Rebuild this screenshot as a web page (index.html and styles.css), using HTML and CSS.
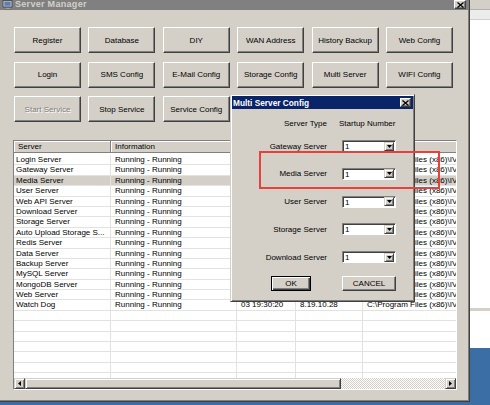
FILE: index.html
```html
<!DOCTYPE html>
<html>
<head>
<meta charset="utf-8">
<title>Server Manager</title>
<link rel="stylesheet" href="styles.css">
</head>
<body>
<div class="desktop">
  <div class="win">
    <div class="titlebar">
      <div class="title-left">
        <svg class="app-icon" width="12" height="10" viewBox="0 0 12 10"><rect x="1" y="0.5" width="9" height="6.5" fill="#c8c8c8" stroke="#404040" stroke-width="0.8"/><rect x="2.4" y="1.6" width="6.2" height="4.2" fill="#5a7fb8"/><rect x="3" y="7.6" width="6" height="2" fill="#a0a0a0" stroke="#505050" stroke-width="0.5"/></svg>
        <span class="title-text">Server Manager</span>
      </div>
      <div class="xbtn main-x"><svg width="7" height="6" viewBox="0 0 7 6"><path d="M0.5 0.5L6.5 5.5M6.5 0.5L0.5 5.5" stroke="#000" stroke-width="1.3"/></svg></div>
    </div>
    <div class="content">
      <div class="btn-grid">
        <button class="btn">Register</button>
        <button class="btn">Database</button>
        <button class="btn">DIY</button>
        <button class="btn">WAN Address</button>
        <button class="btn">History Backup</button>
        <button class="btn">Web Config</button>
        <button class="btn">Login</button>
        <button class="btn">SMS Config</button>
        <button class="btn">E-Mail Config</button>
        <button class="btn">Storage Config</button>
        <button class="btn">Multi Server</button>
        <button class="btn">WIFI Config</button>
        <button class="btn disabled">Start Service</button>
        <button class="btn">Stop Service</button>
        <button class="btn">Service Config</button>
      </div>
      <div class="list">
        <div class="lv-head">
          <div class="hcell">Server</div>
          <div class="hcell">Information</div>
          <div class="hcell"></div>
          <div class="hcell"></div>
          <div class="hcell"></div>
        </div>
        <div class="lv-body">
          <div class="row"><div class="cell">Login Server</div><div class="cell">Running - Running</div><div class="cell"></div><div class="cell"></div><div class="cell">C:\Program Files (x86)\IVMS\</div></div>
          <div class="row"><div class="cell">Gateway Server</div><div class="cell">Running - Running</div><div class="cell"></div><div class="cell"></div><div class="cell">C:\Program Files (x86)\IVMS\</div></div>
          <div class="row sel"><div class="cell">Media Server</div><div class="cell">Running - Running</div><div class="cell"></div><div class="cell"></div><div class="cell">C:\Program Files (x86)\IVMS\</div></div>
          <div class="row"><div class="cell">User Server</div><div class="cell">Running - Running</div><div class="cell"></div><div class="cell"></div><div class="cell">C:\Program Files (x86)\IVMS\</div></div>
          <div class="row"><div class="cell">Web API Server</div><div class="cell">Running - Running</div><div class="cell"></div><div class="cell"></div><div class="cell">C:\Program Files (x86)\IVMS\</div></div>
          <div class="row"><div class="cell">Download Server</div><div class="cell">Running - Running</div><div class="cell"></div><div class="cell"></div><div class="cell">C:\Program Files (x86)\IVMS\</div></div>
          <div class="row"><div class="cell">Storage Server</div><div class="cell">Running - Running</div><div class="cell"></div><div class="cell"></div><div class="cell">C:\Program Files (x86)\IVMS\</div></div>
          <div class="row"><div class="cell">Auto Upload Storage S...</div><div class="cell">Running - Running</div><div class="cell"></div><div class="cell"></div><div class="cell">C:\Program Files (x86)\IVMS\</div></div>
          <div class="row"><div class="cell">Redis Server</div><div class="cell">Running - Running</div><div class="cell"></div><div class="cell"></div><div class="cell">C:\Program Files (x86)\IVMS\</div></div>
          <div class="row"><div class="cell">Data Server</div><div class="cell">Running - Running</div><div class="cell"></div><div class="cell"></div><div class="cell">C:\Program Files (x86)\IVMS\</div></div>
          <div class="row"><div class="cell">Backup Server</div><div class="cell">Running - Running</div><div class="cell"></div><div class="cell"></div><div class="cell">C:\Program Files (x86)\IVMS\</div></div>
          <div class="row"><div class="cell">MySQL Server</div><div class="cell">Running - Running</div><div class="cell"></div><div class="cell"></div><div class="cell">C:\Program Files (x86)\IVMS\</div></div>
          <div class="row"><div class="cell">MongoDB Server</div><div class="cell">Running - Running</div><div class="cell"></div><div class="cell"></div><div class="cell">C:\Program Files (x86)\IVMS\</div></div>
          <div class="row"><div class="cell">Web Server</div><div class="cell">Running - Running</div><div class="cell"></div><div class="cell"></div><div class="cell">C:\Program Files (x86)\IVMS\</div></div>
          <div class="row"><div class="cell">Watch Dog</div><div class="cell">Running - Running</div><div class="cell">03 19:30:20</div><div class="cell">8.19.10.28</div><div class="cell">C:\Program Files (x86)\IVMS\</div></div>
          <div class="row"><div class="cell"></div><div class="cell"></div><div class="cell"></div><div class="cell"></div><div class="cell"></div></div>
          <div class="row"><div class="cell"></div><div class="cell"></div><div class="cell"></div><div class="cell"></div><div class="cell"></div></div>
          <div class="row"><div class="cell"></div><div class="cell"></div><div class="cell"></div><div class="cell"></div><div class="cell"></div></div>
          <div class="row"><div class="cell"></div><div class="cell"></div><div class="cell"></div><div class="cell"></div><div class="cell"></div></div>
          <div class="row"><div class="cell"></div><div class="cell"></div><div class="cell"></div><div class="cell"></div><div class="cell"></div></div>
          <div class="row"><div class="cell"></div><div class="cell"></div><div class="cell"></div><div class="cell"></div><div class="cell"></div></div>
          <div class="row"><div class="cell"></div><div class="cell"></div><div class="cell"></div><div class="cell"></div><div class="cell"></div></div>
        </div>
        <div class="hscroll">
          <div class="sb-btn"><svg width="3" height="5" viewBox="0 0 3 5"><path d="M3 0V5L0 2.5Z" fill="#000"/></svg></div>
          <div class="sb-thumb"></div>
          <div class="sb-track"></div>
          <div class="sb-btn"><svg width="3" height="5" viewBox="0 0 3 5"><path d="M0 0V5L3 2.5Z" fill="#000"/></svg></div>
        </div>
      </div>
    </div>
  </div>
  <div class="side">
    <div class="side-a"></div>
    <div class="side-b"></div>
    <div class="side-c"></div>
    <div class="side-d"></div>
    <div class="side-e"></div>
    <div class="side-f"></div>
  </div>

  <div class="dlg">
    <div class="dlg-title">
      <span>Multi Server Config</span>
      <div class="xbtn dlg-x"><svg width="7" height="6" viewBox="0 0 7 6"><path d="M0.5 0.5L6.5 5.5M6.5 0.5L0.5 5.5" stroke="#000" stroke-width="1.3"/></svg></div>
    </div>
    <div class="dlg-body">
      <div class="cfg-head">
        <div class="cfg-head-l">Server Type</div>
        <div class="cfg-head-r">Startup Number</div>
      </div>
      <div class="cfg-grid">
        <div class="cfg-label">Gateway Server</div>
        <div class="combo"><span>1</span><div class="dd"><svg width="5" height="3" viewBox="0 0 5 3"><path d="M0 0H5L2.5 3Z" fill="#000"/></svg></div></div>
        <div class="cfg-label">Media Server</div>
        <div class="combo"><span>1</span><div class="dd"><svg width="5" height="3" viewBox="0 0 5 3"><path d="M0 0H5L2.5 3Z" fill="#000"/></svg></div></div>
        <div class="cfg-label">User Server</div>
        <div class="combo"><span>1</span><div class="dd"><svg width="5" height="3" viewBox="0 0 5 3"><path d="M0 0H5L2.5 3Z" fill="#000"/></svg></div></div>
        <div class="cfg-label">Storage Server</div>
        <div class="combo"><span>1</span><div class="dd"><svg width="5" height="3" viewBox="0 0 5 3"><path d="M0 0H5L2.5 3Z" fill="#000"/></svg></div></div>
        <div class="cfg-label">Download Server</div>
        <div class="combo"><span>1</span><div class="dd"><svg width="5" height="3" viewBox="0 0 5 3"><path d="M0 0H5L2.5 3Z" fill="#000"/></svg></div></div>
      </div>
      <div class="dlg-btns">
        <button class="btn ok">OK</button>
        <button class="btn cancel">CANCEL</button>
      </div>
    </div>
  </div>

  <div class="highlight"></div>
</div>
</body>
</html>
```

FILE: styles.css
```css
* { box-sizing: border-box; }
html, body { margin: 0; padding: 0; }
body {
  width: 490px;
  height: 405px;
  overflow: hidden;
  font-family: "Liberation Sans", Arial, sans-serif;
  font-size: 8px;
  color: #000;
}
.desktop {
  position: relative;
  width: 490px;
  height: 405px;
  background: #3a6ea5;
  display: flex;
  align-items: flex-start;
}

/* main window */
.win {
  width: 470px;
  height: 402px;
  background: #d4d0c8;
  border-right: 1px solid #404040;
  border-bottom: 1px solid #404040;
  box-shadow: inset -1px -1px #808080;
  display: flex;
  flex-direction: column;
}
.titlebar {
  height: 10px;
  margin-right: 1px;
  background: #808080;
  display: flex;
  align-items: flex-start;
  justify-content: space-between;
  padding: 0 2px 0 2px;
}
.title-left { display: flex; align-items: flex-start; }
.app-icon { display: block; margin-top: 0; }
.title-text {
  margin-left: 1px;
  font-size: 9px;
  font-weight: bold;
  line-height: 8px;
  color: #d4d0c8;
  letter-spacing: 0.3px;
}
.xbtn {
  background: #d4d0c8;
  border: 1px solid;
  border-color: #fff #404040 #404040 #fff;
  box-shadow: inset -1px -1px #808080;
  display: flex;
  align-items: center;
  justify-content: center;
}
.xbtn svg { display: block; }
.main-x { width: 12px; height: 9px; }

.content {
  flex: 1;
  padding: 17px 0 0 14px;
  display: flex;
  flex-direction: column;
}
.btn-grid {
  display: grid;
  grid-template-columns: repeat(6, 67px);
  column-gap: 7.4px;
  row-gap: 8.5px;
}
.btn {
  height: 26px;
  margin: 0;
  padding: 0;
  font-family: inherit;
  font-size: 8px;
  color: #000;
  background: #d4d0c8;
  border: 1px solid;
  border-color: #fff #404040 #404040 #fff;
  box-shadow: inset -1px -1px #808080;
  text-align: center;
  white-space: nowrap;
}
.btn.disabled {
  color: #808080;
  text-shadow: 1px 1px #fff;
}

/* list view */
.list {
  margin-top: 18px;
  margin-left: -1px;
  width: 444px;
  height: 250px;
  background: #fff;
  border: 1px solid;
  border-color: #808080 #fff #fff #808080;
  display: flex;
  flex-direction: column;
  overflow: hidden;
}
.lv-head {
  flex: none;
  height: 12px;
  display: grid;
  grid-template-columns: 97px 126px 59px 67px 200px;
  background: #d4d0c8;
  border-bottom: 1px solid #808080;
}
.hcell {
  padding-left: 4px;
  line-height: 11px;
  white-space: nowrap;
  overflow: hidden;
  border-right: 1px solid #808080;
  box-shadow: inset 1px 1px #fff;
}
.lv-body {
  flex: 1;
  overflow: hidden;
  padding-top: 2px;
}
.row {
  height: 10.4px;
  display: grid;
  grid-template-columns: 97px 126px 59px 67px 200px;
  line-height: 10px;
}
.row.sel { background: #d4d0c8; }
.cell {
  padding-left: 4px;
  white-space: nowrap;
  overflow: hidden;
  border-right: 1px solid #e2e2e2;
  border-bottom: 1px solid #e2e2e2;
}
.cell:first-child { padding-left: 2px; }

.hscroll {
  flex: none;
  height: 11px;
  display: flex;
}
.sb-btn, .sb-thumb {
  background: #d4d0c8;
  border: 1px solid;
  border-color: #d4d0c8 #404040 #404040 #d4d0c8;
  box-shadow: inset 1px 1px #fff, inset -1px -1px #808080;
}
.sb-btn {
  width: 11px;
  display: flex;
  align-items: center;
  justify-content: center;
}
.sb-btn svg { display: block; }
.sb-thumb { width: 316px; }
.sb-track {
  flex: 1;
  background: repeating-conic-gradient(#d4d0c8 0 25%, #fff 0 50%) 0 0 / 2px 2px;
}

/* right side background */
.side {
  width: 20px;
  height: 405px;
  display: flex;
  flex-direction: column;
}
.side-a { height: 9px; background: #d4d0c8; }
.side-b { height: 11px; background: #ececec; border-top: 1px solid #b0b0b0; border-bottom: 1px solid #cfcfcf; }
.side-c { height: 288px; background: #fff; }
.side-d { height: 3px; background: #d4d0c8; }
.side-e { height: 37px; background: #fff; }
.side-f { flex: 1; background: #3a6ea5; }

/* dialog */
.dlg {
  position: absolute;
  left: 230px;
  top: 94px;
  width: 185px;
  height: 208px;
  background: #d4d0c8;
  border: 1px solid;
  border-color: #d4d0c8 #404040 #404040 #d4d0c8;
  box-shadow: inset 1px 1px #fff, inset -1px -1px #808080;
  padding: 1px;
  display: flex;
  flex-direction: column;
}
.dlg-title {
  height: 13px;
  background: #0a246a;
  color: #fff;
  font-weight: bold;
  font-size: 8.3px;
  display: flex;
  align-items: center;
  justify-content: space-between;
  padding: 0 2px 0 1px;
}
.dlg-x { width: 11px; height: 9px; }
.dlg-body {
  padding-top: 8.5px;
  display: flex;
  flex-direction: column;
}
.cfg-head {
  height: 11px;
  line-height: 11px;
  display: flex;
}
.cfg-head-l { width: 95px; text-align: right; }
.cfg-head-r { margin-left: 12px; }
.cfg-grid {
  margin-top: 11.5px;
  display: grid;
  grid-template-columns: 95px 54px;
  grid-auto-rows: 12px;
  column-gap: 15px;
  row-gap: 15.75px;
  align-items: center;
}
.cfg-label { text-align: right; white-space: nowrap; }
.combo {
  height: 12px;
  background: #fff;
  border: 1px solid;
  border-color: #808080 #fff #fff #808080;
  box-shadow: inset 1px 1px #404040;
  display: flex;
  align-items: center;
  justify-content: space-between;
  padding: 1px 1px 0 2px;
  line-height: 9px;
}
.dd {
  width: 10px;
  height: 9px;
  margin-top: -1px;
  background: #d4d0c8;
  border: 1px solid;
  border-color: #d4d0c8 #404040 #404040 #d4d0c8;
  box-shadow: inset 1px 1px #fff, inset -1px -1px #808080;
  display: flex;
  align-items: center;
  justify-content: center;
}
.dd svg { display: block; }
.dlg-btns {
  margin-top: 13px;
  padding-left: 39px;
  display: flex;
  gap: 31px;
}
.dlg-btns .btn { height: 15px; }
.btn.ok {
  width: 40px;
  border-color: #000;
  box-shadow: inset 1px 1px #fff, inset -1px -1px #404040, inset -2px -2px #808080;
}
.btn.cancel { width: 54px; }

/* red annotation box */
.highlight {
  position: absolute;
  left: 259px;
  top: 151px;
  width: 181px;
  height: 38px;
  border: 2px solid #e8403c;
}
```
